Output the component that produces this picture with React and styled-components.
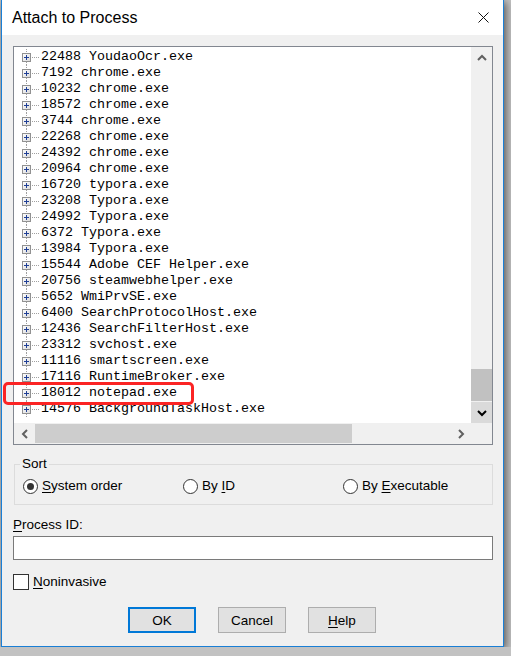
import styled, { createGlobalStyle } from "styled-components";

const GlobalStyle = createGlobalStyle`
  html, body {
    margin: 0;
    padding: 0;
    background: #c2c2c2;
  }
  body {
    font-family: "Liberation Sans", Arial, sans-serif;
  }
`;

const processes = [
  "22488 YoudaoOcr.exe",
  "7192 chrome.exe",
  "10232 chrome.exe",
  "18572 chrome.exe",
  "3744 chrome.exe",
  "22268 chrome.exe",
  "24392 chrome.exe",
  "20964 chrome.exe",
  "16720 typora.exe",
  "23208 Typora.exe",
  "24992 Typora.exe",
  "6372 Typora.exe",
  "13984 Typora.exe",
  "15544 Adobe CEF Helper.exe",
  "20756 steamwebhelper.exe",
  "5652 WmiPrvSE.exe",
  "6400 SearchProtocolHost.exe",
  "12436 SearchFilterHost.exe",
  "23312 svchost.exe",
  "11116 smartscreen.exe",
  "17116 RuntimeBroker.exe",
  "18012 notepad.exe",
  "14576 BackgroundTaskHost.exe",
];

const Window = styled.div`
  position: relative;
  box-sizing: border-box;
  width: 503px;
  height: 647px;
  margin-left: 1px;
  border: 1px solid #1a7fd6;
  border-top: none;
  background: #f0f0f0;
  box-shadow: 2px 2px 8px rgba(0, 0, 0, 0.55);
  display: flex;
  flex-direction: column;
`;

const TitleBar = styled.div`
  height: 35px;
  background: #ffffff;
  display: flex;
  align-items: center;
  justify-content: space-between;
  padding: 0 14px 0 10px;
  flex-shrink: 0;
`;

const Title = styled.div`
  font-size: 16px;
  color: #000;
  margin-top: 1px;
`;

const Body = styled.div`
  padding: 11px 10px 0 11px;
  display: flex;
  flex-direction: column;
  font-size: 13.5px;
  color: #000;
`;

const ListBox = styled.div`
  box-sizing: border-box;
  width: 480px;
  height: 399px;
  border: 1px solid #828790;
  background: #ffffff;
  display: flex;
  flex-direction: column;
`;

const ListTop = styled.div`
  flex: 1;
  display: flex;
  min-height: 0;
`;

const Items = styled.div`
  flex: 1;
  overflow: hidden;
  padding-top: 2px;
`;

const Row = styled.div`
  height: 16px;
  display: flex;
  align-items: center;
  padding-left: 8px;
  font-family: "Liberation Mono", "Courier New", monospace;
  font-size: 13.33px;
  line-height: 16px;
  white-space: nowrap;
  color: #000;
`;

const VScroll = styled.div`
  width: 21px;
  background: #f0f0f0;
  display: flex;
  flex-direction: column;
`;

const ScrollButton = styled.div`
  width: 21px;
  height: 21px;
  flex-shrink: 0;
  display: flex;
  align-items: center;
  justify-content: center;
  background: ${(p) => (p.$hover ? "#dadada" : "#f0f0f0")};
`;

const VTrack = styled.div`
  flex: 1;
  display: flex;
  flex-direction: column;
  justify-content: flex-end;
`;

const VThumb = styled.div`
  height: 32px;
  margin: 0 0 1px 0;
  background: #c1c1c1;
`;

const HScroll = styled.div`
  height: 21px;
  background: #f0f0f0;
  display: flex;
  flex-shrink: 0;
`;

const HTrack = styled.div`
  flex: 1;
  display: flex;
  align-items: stretch;
`;

const HThumb = styled.div`
  width: 317px;
  margin: 1px 0;
  background: #cdcdcd;
`;

const Corner = styled.div`
  width: 21px;
  background: #f0f0f0;
`;

const Highlight = styled.div`
  position: absolute;
  left: 1px;
  top: 382px;
  width: 191px;
  height: 23px;
  box-sizing: border-box;
  border: 3.5px solid #fb2424;
  border-radius: 5px;
  pointer-events: none;
`;

const SortGroup = styled.fieldset`
  margin: 11px 0 0 1px;
  width: 479px;
  box-sizing: border-box;
  border: 1px solid #dcdcdc;
  padding: 6px 0 10px 5px;
`;

const Legend = styled.legend`
  padding: 0 2px;
  font-size: 13.5px;
  line-height: 16px;
`;

const RadioRow = styled.div`
  display: grid;
  grid-template-columns: 160px 160px 1fr;
  height: 16px;
  margin-left: 3px;
`;

const RadioLabel = styled.label`
  display: flex;
  align-items: center;
  gap: 4px;
  line-height: 16px;
`;

const RadioCircle = styled.span`
  box-sizing: border-box;
  width: 15px;
  height: 15px;
  border-radius: 50%;
  border: 1px solid #333;
  background: #fff;
  display: flex;
  align-items: center;
  justify-content: center;

  &::after {
    content: "";
    width: 7px;
    height: 7px;
    border-radius: 50%;
    background: ${(p) => (p.$checked ? "#333" : "transparent")};
  }
`;

const Mn = styled.span`
  text-decoration: underline;
  text-underline-offset: 2px;
`;

const FieldLabel = styled.div`
  margin-top: 12px;
  line-height: 16px;
`;

const TextInput = styled.div`
  margin-top: 3px;
  box-sizing: border-box;
  width: 480px;
  height: 24px;
  border: 1px solid #7a7a7a;
  background: #fff;
`;

const CheckRow = styled.label`
  margin-top: 14px;
  display: flex;
  align-items: center;
  gap: 4px;
  line-height: 16px;
`;

const CheckBox = styled.span`
  box-sizing: border-box;
  width: 16px;
  height: 16px;
  border: 1px solid #333;
  background: #fff;
`;

const ButtonRow = styled.div`
  margin-top: 17px;
  display: flex;
  justify-content: center;
  gap: 22px;
  padding-right: 2px;
`;

const Button = styled.div`
  box-sizing: border-box;
  width: 68px;
  height: 26px;
  display: flex;
  align-items: center;
  justify-content: center;
  background: #e1e1e1;
  border: ${(p) => (p.$default ? "2px solid #0078d7" : "1px solid #adadad")};
  font-size: 13.5px;
`;

function TreeNode() {
  return (
    <svg width="19" height="16" viewBox="0 0 19 16" style={{ flexShrink: 0 }}>
      <line x1="4.5" y1="0" x2="4.5" y2="4" stroke="#a0a0a0" strokeDasharray="1 1" />
      <line x1="4.5" y1="13" x2="4.5" y2="16" stroke="#a0a0a0" strokeDasharray="1 1" />
      <line x1="10" y1="8.5" x2="17" y2="8.5" stroke="#a0a0a0" strokeDasharray="1 1" />
      <defs>
        <linearGradient id="nodefill" x1="0" y1="0" x2="1" y2="1">
          <stop offset="0" stopColor="#ffffff" />
          <stop offset="1" stopColor="#d8d8d8" />
        </linearGradient>
      </defs>
      <rect x="0.5" y="4.5" width="8" height="8" fill="url(#nodefill)" stroke="#919191" />
      <line x1="2" y1="8.5" x2="7" y2="8.5" stroke="#1f3f95" />
      <line x1="4.5" y1="6" x2="4.5" y2="11" stroke="#1f3f95" />
    </svg>
  );
}

function Chevron({ dir, color }) {
  const paths = {
    up: "M1 6 L5 2 L9 6",
    down: "M1 2 L5 6 L9 2",
    left: "M6 1 L2 5 L6 9",
    right: "M2 1 L6 5 L2 9",
  };
  const horiz = dir === "left" || dir === "right";
  return (
    <svg
      width={horiz ? 8 : 10}
      height={horiz ? 10 : 8}
      viewBox={horiz ? "0 0 8 10" : "0 0 10 8"}
    >
      <path d={paths[dir]} fill="none" stroke={color} strokeWidth="2" />
    </svg>
  );
}

export default function App() {
  return (
    <>
      <GlobalStyle />
      <Window>
        <TitleBar>
          <Title>Attach to Process</Title>
          <svg width="11" height="11" viewBox="0 0 11 11">
            <path d="M0.5 0.5 L10.5 10.5 M10.5 0.5 L0.5 10.5" stroke="#111" strokeWidth="1" />
          </svg>
        </TitleBar>

        <Body>
          <ListBox>
            <ListTop>
              <Items>
                {processes.map((p) => (
                  <Row key={p}>
                    <TreeNode />
                    <span>{p}</span>
                  </Row>
                ))}
              </Items>
              <VScroll>
                <ScrollButton>
                  <Chevron dir="up" color="#606060" />
                </ScrollButton>
                <VTrack>
                  <VThumb />
                </VTrack>
                <ScrollButton $hover>
                  <Chevron dir="down" color="#000" />
                </ScrollButton>
              </VScroll>
            </ListTop>
            <HScroll>
              <ScrollButton>
                <Chevron dir="left" color="#606060" />
              </ScrollButton>
              <HTrack>
                <HThumb />
              </HTrack>
              <ScrollButton>
                <Chevron dir="right" color="#606060" />
              </ScrollButton>
              <Corner />
            </HScroll>
          </ListBox>

          <SortGroup>
            <Legend>Sort</Legend>
            <RadioRow>
              <RadioLabel>
                <RadioCircle $checked />
                <span>
                  <Mn>S</Mn>ystem order
                </span>
              </RadioLabel>
              <RadioLabel>
                <RadioCircle />
                <span>
                  By <Mn>I</Mn>D
                </span>
              </RadioLabel>
              <RadioLabel>
                <RadioCircle />
                <span>
                  By <Mn>E</Mn>xecutable
                </span>
              </RadioLabel>
            </RadioRow>
          </SortGroup>

          <FieldLabel>
            <Mn>P</Mn>rocess ID:
          </FieldLabel>
          <TextInput />

          <CheckRow>
            <CheckBox />
            <span>
              <Mn>N</Mn>oninvasive
            </span>
          </CheckRow>

          <ButtonRow>
            <Button $default>OK</Button>
            <Button>Cancel</Button>
            <Button>
              <span>
                <Mn>H</Mn>elp
              </span>
            </Button>
          </ButtonRow>
        </Body>

        <Highlight />
      </Window>
    </>
  );
}
